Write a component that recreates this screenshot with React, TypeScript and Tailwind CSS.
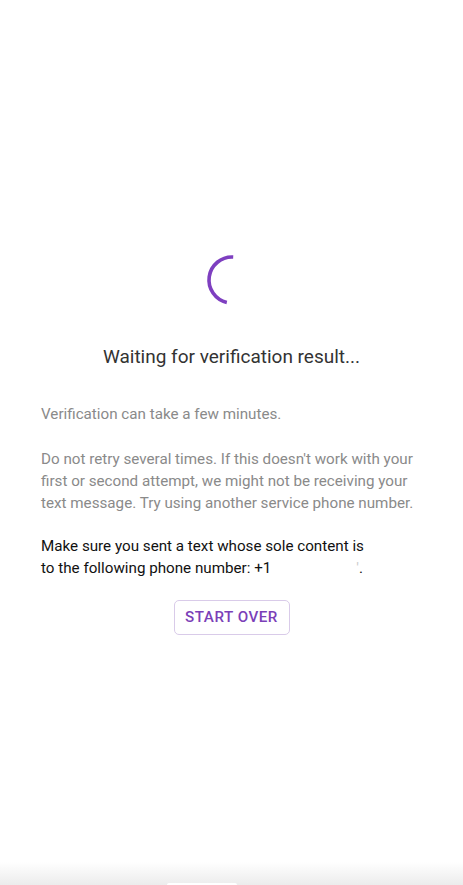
export default function App() {
  return (
    <div
      className="flex h-[885px] w-full flex-col bg-white"
      style={{ fontFamily: 'Roboto, "Noto Sans", sans-serif' }}
    >
      <main className="flex flex-1 flex-col items-center pt-[254px] px-[41px]">
        <svg width="52" height="52" viewBox="0 0 52 52" fill="none">
          <path
            d="M 27.2 3.03 A 23 23 0 0 0 20.83 48.41"
            stroke="#7e3fc0"
            strokeWidth="3.6"
            strokeLinecap="butt"
          />
        </svg>
        <h1 className="mt-[37px] text-[19px] leading-[28px] text-[#333333]">
          Waiting for verification result...
        </h1>
        <div className="mt-[32px] w-full text-[15.2px] leading-[22px] text-[#8a8a8a]">
          <p>Verification can take a few minutes.</p>
          <p className="mt-[23px]">
            Do not retry several times. If this doesn't work with your first or second attempt,
            we might not be receiving your text message. Try using another service phone number.
          </p>
          <p className="mt-[21px] text-[#111111]">
            Make sure you sent a text whose sole content is
            <br />
            to the following phone number: +1
            <span className="inline-block w-[85px]" />
            <span className="text-[#cccccc]">'</span>.
          </p>
        </div>
        <button className="mt-[21px] h-[35px] w-[116px] rounded-[5px] border border-[#d9cbe9] text-[15.2px] font-medium tracking-[0.5px] text-[#7b3fb8]">
          START OVER
        </button>
      </main>
      <div className="relative h-[23px] bg-gradient-to-b from-white to-[#ececec]">
        <div className="absolute bottom-0 left-[167px] h-[2px] w-[70px] rounded-t-full bg-white" />
      </div>
    </div>
  );
}
